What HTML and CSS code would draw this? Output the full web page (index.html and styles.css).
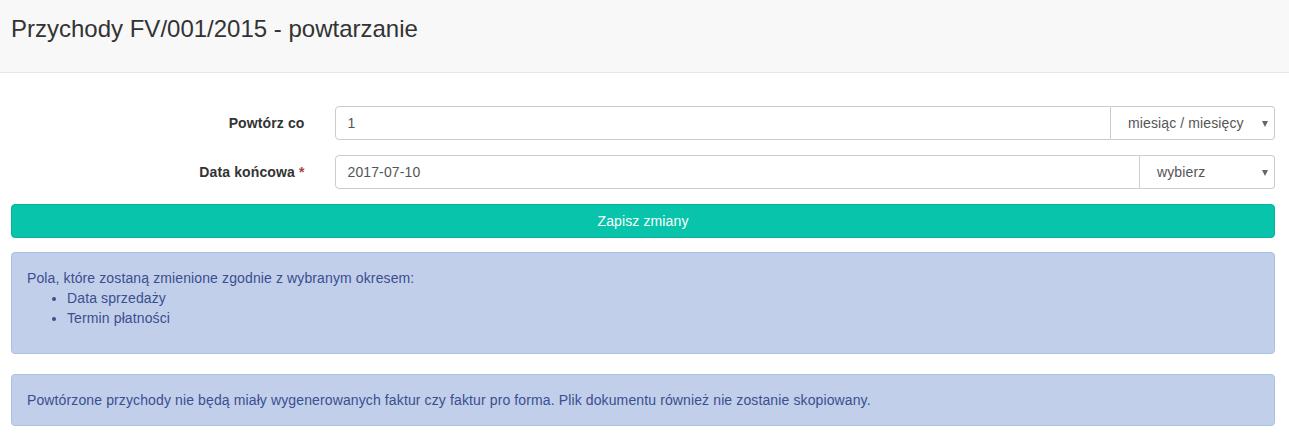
FILE: index.html
```html
<!DOCTYPE html>
<html lang="pl">
<head>
<meta charset="utf-8">
<title>Przychody FV/001/2015 - powtarzanie</title>
<link rel="stylesheet" href="styles.css">
</head>
<body>
<header class="page-header">
  <h1 class="page-title">Przychody FV/001/2015 - powtarzanie</h1>
</header>
<main class="content">
  <form class="form">
    <div class="form-row">
      <label class="form-label">Powtórz co</label>
      <div class="input-group">
        <input class="form-input" type="text" value="1">
        <div class="select select-wide">
          <span class="select-text">miesiąc / miesięcy</span>
          <span class="caret"></span>
        </div>
      </div>
    </div>
    <div class="form-row">
      <label class="form-label">Data końcowa <span class="req">*</span></label>
      <div class="input-group">
        <input class="form-input" type="text" value="2017-07-10">
        <div class="select select-narrow">
          <span class="select-text">wybierz</span>
          <span class="caret"></span>
        </div>
      </div>
    </div>
    <button class="btn-save" type="button">Zapisz zmiany</button>
  </form>
  <div class="alert alert-list">
    <div>Pola, które zostaną zmienione zgodnie z wybranym okresem:</div>
    <ul class="alert-ul">
      <li>Data sprzedaży</li>
      <li>Termin płatności</li>
    </ul>
  </div>
  <div class="alert alert-last">
    Powtórzone przychody nie będą miały wygenerowanych faktur czy faktur pro forma. Plik dokumentu również nie zostanie skopiowany.
  </div>
</main>
</body>
</html>
```

FILE: styles.css
```css
* { box-sizing: border-box; }
html, body { margin: 0; padding: 0; }
body {
  font-family: "Liberation Sans", Arial, sans-serif;
  font-size: 14px;
  line-height: 20px;
  letter-spacing: 0.12px;
  color: #333;
  background: #fff;
}
.page-header {
  height: 73px;
  background: #f8f8f8;
  border-bottom: 1px solid #e7e7e7;
  padding: 14px 11px 0;
}
.page-title {
  margin: 0;
  font-size: 24px;
  font-weight: normal;
  line-height: 30px;
  letter-spacing: 0;
  color: #333;
}
.content {
  padding: 33px 14px 0 11px;
}
.form-row {
  display: grid;
  grid-template-columns: 293.5px 1fr;
  column-gap: 30px;
  align-items: center;
  margin-bottom: 15px;
}
.form-label {
  text-align: right;
  font-weight: bold;
  color: #333;
}
.req { color: #a94442; font-weight: bold; }
.input-group {
  display: flex;
  height: 34px;
}
.form-input {
  flex: 1;
  min-width: 0;
  height: 34px;
  border: 1px solid #ccc;
  border-radius: 4px 0 0 4px;
  padding: 6px 12px;
  font-family: inherit;
  font-size: 14px;
  letter-spacing: 0.12px;
  color: #555;
  background: #fff;
  outline: none;
}
.select {
  position: relative;
  height: 34px;
  border: 1px solid #ccc;
  border-left: none;
  border-radius: 0 4px 4px 0;
  background: #fff;
  color: #555;
  padding: 6px 0 6px 17px;
}
.select-wide { width: 164px; }
.select-narrow { width: 135px; }
.select-text { line-height: 20px; }
.caret {
  position: absolute;
  right: 6px;
  top: 14px;
  width: 0;
  height: 0;
  border-left: 3.5px solid transparent;
  border-right: 3.5px solid transparent;
  border-top: 6px solid #666;
}
.btn-save {
  display: block;
  width: 100%;
  height: 34px;
  border: 1px solid #06b29b;
  border-radius: 4px;
  background: #07c4aa;
  color: #fff;
  font-family: inherit;
  font-size: 14px;
  letter-spacing: 0.12px;
  margin: 0 0 14px;
  padding: 6px 12px;
}
.alert {
  background: #c1cfeb;
  border: 1px solid #a8c0e4;
  border-radius: 4px;
  color: #3b4e8e;
  padding: 15px;
  margin-bottom: 20px;
}
.alert-last { margin-bottom: 0; }
.alert-ul {
  margin: 0 0 10px;
  padding-left: 40px;
}
```
